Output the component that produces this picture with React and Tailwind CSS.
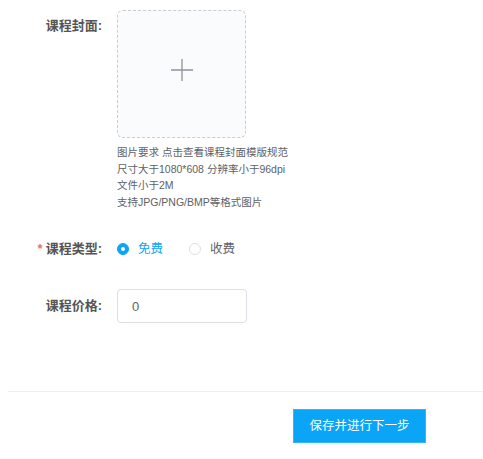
import React, { useState } from "react";

const font = { fontFamily: '"Liberation Sans", "Noto Sans CJK SC", sans-serif' };

const Label = ({ children, required }) => (
  <div className="w-[102px] shrink-0 text-right text-[13px] font-bold text-[#555] leading-[32px]">
    {required && <span className="text-[#f56c6c] mr-[3px]">*</span>}
    {children}
  </div>
);

const Radio = ({ checked, label, onClick }) => (
  <label className="flex items-center cursor-pointer" onClick={onClick}>
    <span
      className={`w-[12px] h-[12px] rounded-full flex items-center justify-center border ${
        checked ? "bg-[#0ba5f7] border-[#0ba5f7]" : "bg-white border-[#dcdfe6]"
      }`}
    >
      {checked && <span className="w-[4px] h-[4px] rounded-full bg-white" />}
    </span>
    <span className={`ml-[9px] text-[12.5px] ${checked ? "text-[#0ba5f7]" : "text-[#606266]"}`}>{label}</span>
  </label>
);

export default function App() {
  const [type, setType] = useState("free");

  return (
    <div className="bg-white w-[483px] h-[459px] overflow-hidden" style={font}>
      <div className="pt-[10px]">
        {/* 课程封面 */}
        <div className="flex">
          <Label>课程封面:</Label>
          <div className="ml-[15px]">
            <div className="w-[129px] h-[128px] rounded-[6px] border border-dashed border-[#c9ccd3] bg-[#fafbfd] flex items-center justify-center">
              <svg width="22" height="22" viewBox="0 0 22 22" className="mb-[9px]">
                <path d="M11 0v22M0 11h22" stroke="#8c939d" strokeWidth="1.3" />
              </svg>
            </div>
            <div className="mt-[6px] text-[10.5px] leading-[16.5px] text-[#606266]">
              <div>图片要求 点击查看课程封面模版规范</div>
              <div>尺寸大于1080*608 分辨率小于96dpi</div>
              <div>文件小于2M</div>
              <div>支持JPG/PNG/BMP等格式图片</div>
            </div>
          </div>
        </div>

        {/* 课程类型 */}
        <div className="flex mt-[23px]">
          <Label required>课程类型:</Label>
          <div className="ml-[15px] flex items-center gap-[26px]">
            <Radio checked={type === "free"} label="免费" onClick={() => setType("free")} />
            <Radio checked={type === "paid"} label="收费" onClick={() => setType("paid")} />
          </div>
        </div>

        {/* 课程价格 */}
        <div className="flex items-center mt-[24px]">
          <Label>课程价格:</Label>
          <input
            defaultValue="0"
            className="ml-[15px] w-[130px] h-[34px] rounded-[4px] border border-[#dcdfe6] px-[14px] text-[13px] text-[#606266] outline-none"
          />
        </div>

        <div className="ml-[8px] mt-[68px] border-t border-[#eeeeee]" />

        <div className="flex pl-[293px] mt-[17px]">
          <button className="w-[133px] h-[34px] bg-[#0ba5f7] border border-[#33b5fa] text-white text-[12.5px]">
            保存并进行下一步
          </button>
        </div>
      </div>
    </div>
  );
}
